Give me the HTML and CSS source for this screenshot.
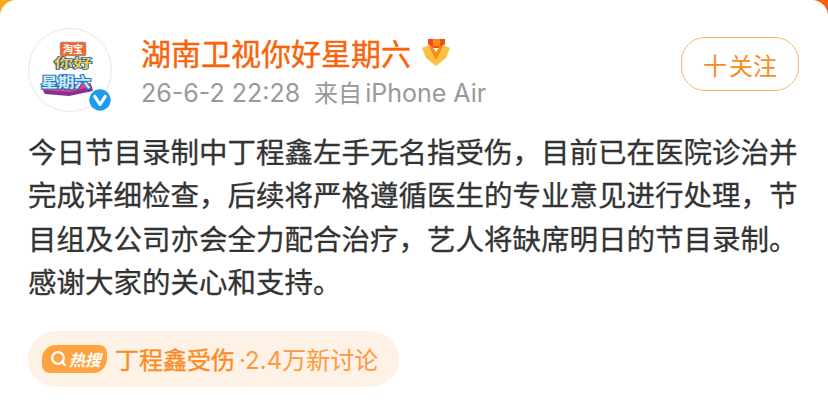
FILE: index.html
```html
<!DOCTYPE html>
<html lang="zh-CN">
  <head>
    <meta charset="UTF-8" />
    <meta name="viewport" content="width=device-width, initial-scale=1.0" />
    <title>微博</title>
    <link rel="stylesheet" href="styles.css">
  </head>
  <body>
    <div class="card">
      <div class="head">
        <div class="avatar">
          <svg class="logo" width="56" height="56" viewBox="0 0 56 56">
            <path d="M2 46 L52 43 L54 50 L30 55 L6 53 Z" fill="#8a2f93"/>
            <path d="M2 45 L52 42 L52 46 L30 51 L5 49 Z" fill="#e2447f"/>
            <rect x="21" y="1" width="26" height="14" rx="1.5" fill="#f0672b" stroke="#8fa6d8" stroke-width="0.6"/>
            <text class="logo-tag" x="34" y="11.5" text-anchor="middle">淘宝</text>
            <text class="logo-top" x="15" y="27" textLength="38" lengthAdjust="spacingAndGlyphs">你好</text>
            <text class="logo-low" x="2" y="46" textLength="50" lengthAdjust="spacingAndGlyphs">星期六</text>
          </svg>
          <svg class="vip" width="24" height="24" viewBox="0 0 24 24">
            <circle cx="12" cy="12" r="11.3" fill="#1f9cec" stroke="#fff" stroke-width="1.2"/>
            <path d="M6.8 8.5 L12 16.5 L17.2 8.5" fill="none" stroke="#fff" stroke-width="3.2" stroke-linecap="round" stroke-linejoin="round"/>
          </svg>
        </div>
        <div class="who">
          <div class="name-row">
            <span class="name">湖南卫视你好星期六</span>
            <svg class="medal" width="28" height="28" viewBox="0 0 28 28">
              <path d="M6 1 H23 V6 L19 10 H10 L6 6 Z" fill="#ee4d1c"/>
              <path d="M11 1 H18 V8 H11 Z" fill="#f98a1f"/>
              <path d="M0 10 L7 7 L14 15 L21 7 L28 10 L24 20 L14 28 L4 20 Z" fill="#fcc046"/>
              <path d="M7 9 L14 22 L21 9 L18 8 L14 14 L10 8 Z" fill="#f58f12"/>
            </svg>
          </div>
          <div class="meta">26-6-2 22:28<span class="from">来自</span> iPhone Air</div>
        </div>
        <div class="follow">
          <span class="plus">十</span>关注
        </div>
      </div>
      <div class="text">今日节目录制中丁程鑫左手无名指受伤，目前已在医院诊治并完成详细检查，后续将严格遵循医生的专业意见进行处理，节目组及公司亦会全力配合治疗，艺人将缺席明日的节目录制。感谢大家的关心和支持。</div>
      <div class="hot">
        <div class="hot-tag">
          <svg width="17" height="17" viewBox="0 0 17 17">
            <circle cx="8" cy="8" r="5.8" fill="none" stroke="#fff" stroke-width="2.3"/>
            <path d="M12.2 12.2 L15 15" stroke="#fff" stroke-width="2.3" stroke-linecap="round"/>
          </svg>
          <span>热搜</span>
        </div>
        <span class="hot-title">丁程鑫受伤</span>
        <span class="hot-count">·2.4万新讨论</span>
      </div>
    </div>
  </body>
</html>
```

FILE: styles.css
```css
html,
body {
  margin: 0;
  height: 100%;
}
body {
  font-family: Inter, "Noto Sans CJK SC", sans-serif;
  background: linear-gradient(90deg, #fca71f, #fb6010);
  overflow: hidden;
}
.card {
  box-sizing: border-box;
  width: 828px;
  height: 410px;
  padding: 28px 28px 0 28px;
  background: #fff;
  border-radius: 16px 16px 0 0;
}
.head {
  display: flex;
  align-items: flex-start;
}
.avatar {
  box-sizing: border-box;
  position: relative;
  width: 84px;
  height: 84px;
  border: 1px solid #e8e8e8;
  border-radius: 50%;
  display: flex;
  align-items: center;
  justify-content: center;
}
.logo {
  margin: 0 6px 2px 0;
}
.logo text {
  font-family: "Noto Sans CJK SC", sans-serif;
  font-weight: bold;
}
.logo-tag {
  font-size: 10px;
  fill: #fff;
}
.logo-top {
  font-size: 12px;
  fill: #f6cb3f;
  stroke: #1d5fa8;
  stroke-width: 1.4px;
  paint-order: stroke;
}
.logo-low {
  font-size: 14px;
  fill: #c5f1fa;
  stroke: #2b6fbc;
  stroke-width: 2px;
  paint-order: stroke;
}
.vip {
  position: absolute;
  right: -1px;
  bottom: -1px;
}
.who {
  flex: 1;
  margin-left: 29px;
}
.name-row {
  display: flex;
  align-items: center;
  height: 48px;
}
.name {
  font-size: 30px;
  color: #f8640a;
  -webkit-text-stroke: 0.4px #f8640a;
}
.medal {
  margin-left: 11px;
}
.meta {
  font-size: 25px;
  line-height: 32px;
  margin-top: 1px;
  color: #999;
  white-space: nowrap;
}
.from {
  margin: 0 -4px 0 14px;
  font-size: 24px;
}
.follow {
  box-sizing: border-box;
  width: 118px;
  height: 54px;
  margin: 9px 1px 0 0;
  border: 1px solid #fbb267;
  border-radius: 24px;
  color: #fb8a1d;
  font-size: 24px;
  display: flex;
  align-items: center;
  justify-content: center;
}
.plus {
  margin-right: 2px;
}
.text {
  margin-top: 19px;
  font-size: 28.5px;
  line-height: 43.4px;
  color: #333;
  width: 772px;
  -webkit-text-stroke: 0.3px #333;
}
.hot {
  display: flex;
  align-items: center;
  box-sizing: border-box;
  width: 371px;
  height: 56px;
  margin-top: 26px;
  padding-left: 14px;
  border-radius: 28px;
  background: #fef1e5;
}
.hot-tag {
  display: flex;
  align-items: center;
  flex: none;
  width: 65px;
  height: 28px;
  padding-left: 8px;
  box-sizing: border-box;
  border-radius: 14px 8px 14px 8px;
  background: #fea33f;
  color: #fff;
  font-size: 16px;
  font-weight: bold;
  font-style: italic;
}
.hot-tag span {
  margin-left: 2px;
  white-space: nowrap;
}
.hot-title {
  margin-left: 8px;
  font-size: 24px;
  color: #fb8a1d;
  -webkit-text-stroke: 0.3px #fb8a1d;
  white-space: nowrap;
}
.hot-count {
  margin-left: 4px;
  font-size: 24px;
  color: #fc9a3c;
  white-space: nowrap;
}
```
